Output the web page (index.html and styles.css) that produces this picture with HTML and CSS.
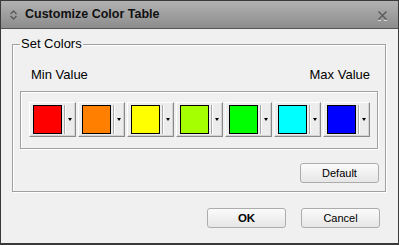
FILE: index.html
```html
<!DOCTYPE html>
<html lang="en">
<head>
  <meta charset="UTF-8" />
  <title>Customize Color Table</title>
  <link rel="stylesheet" href="styles.css">
</head>
<body>
  <div class="dialog">
    <div class="titlebar">
      <svg class="collapse" width="7" height="10" viewBox="0 0 7 10">
        <path d="M0.5 4 L3.5 1 L6.5 4" fill="none" stroke="#5a5a5a" stroke-width="1.4"/>
        <path d="M0.5 6 L3.5 9 L6.5 6" fill="none" stroke="#5a5a5a" stroke-width="1.4"/>
      </svg>
      <span class="title">Customize Color Table</span>
      <svg class="close" width="11" height="11" viewBox="0 0 11 11">
        <path d="M1.5 1.5 L9.5 9.5 M9.5 1.5 L1.5 9.5" stroke="#5e5e5e" stroke-width="1.6"/>
        <path d="M1 10.5 L4 10.5 M7 10.5 L10 10.5" stroke="#d8d8d8" stroke-width="1"/>
      </svg>
    </div>

    <div class="content">
      <fieldset class="group">
        <legend>Set Colors</legend>
        <div class="range-labels">
          <span>Min Value</span>
          <span>Max Value</span>
        </div>

        <!-- Palette : 7 boutons couleur avec flèche -->
        <div class="palette">
          <button class="color-btn"><span class="swatch red"></span><span class="drop"></span></button>
          <button class="color-btn"><span class="swatch orange"></span><span class="drop"></span></button>
          <button class="color-btn"><span class="swatch yellow"></span><span class="drop"></span></button>
          <button class="color-btn"><span class="swatch lime"></span><span class="drop"></span></button>
          <button class="color-btn"><span class="swatch green"></span><span class="drop"></span></button>
          <button class="color-btn"><span class="swatch cyan"></span><span class="drop"></span></button>
          <button class="color-btn"><span class="swatch blue"></span><span class="drop"></span></button>
        </div>

        <div class="group-actions">
          <button class="btn">Default</button>
        </div>
      </fieldset>

      <div class="actions">
        <button class="btn btn-ok">OK</button>
        <button class="btn">Cancel</button>
      </div>
    </div>
  </div>
</body>
</html>
```

FILE: styles.css
```css
/* --- Reset --- */
* {
  margin: 0;
  padding: 0;
  box-sizing: border-box;
}
html,
body {
  width: 399px;
  height: 245px;
  font-family: "Liberation Sans", Arial, sans-serif;
  background: #f0f0f0;
  color: #000;
  overflow: hidden;
}

/* --- Fenêtre --- */
.dialog {
  width: 399px;
  height: 245px;
  border: 1px solid #3a3a3a;
  border-bottom-width: 2px;
  background: #f0f0f0;
  display: flex;
  flex-direction: column;
}

/* --- Barre de titre --- */
.titlebar {
  height: 28px;
  flex: none;
  display: flex;
  align-items: center;
  padding: 0 10px 0 9px;
  background: linear-gradient(#b2b2b2, #8c8c8c);
  border-bottom: 1px solid #555;
}
.collapse {
  flex: none;
  margin-top: 1px;
}
.title {
  flex: 1;
  margin-left: 8px;
  font-size: 12.5px;
  line-height: 15px;
  font-weight: bold;
  color: #111;
}
.close {
  flex: none;
  margin-top: 2px;
}

/* --- Contenu --- */
.content {
  padding: 7px 18px 0 11px;
}

/* --- Cadre "Set Colors" --- */
.group {
  border: 1px solid #a0a0a0;
  box-shadow: 1px 1px 0 #fff, inset 1px 1px 0 #fff;
  padding: 15px 7px 8px 7px;
}
.group legend {
  padding: 0 1px;
  font-size: 13px;
  line-height: 16px;
}

.range-labels {
  display: flex;
  justify-content: space-between;
  padding: 0 8px 0 11px;
  font-size: 13px;
  line-height: 15px;
  margin-bottom: 9px;
}

/* --- Palette de couleurs --- */
.palette {
  display: flex;
  gap: 2px;
  border: 1px solid #a0a0a0;
  box-shadow: inset 1px 1px 0 #fff, 1px 1px 0 #fff;
  padding: 10px 7px 11px 8px;
}
.color-btn {
  width: 47px;
  height: 35px;
  display: flex;
  align-items: center;
  padding: 2px 0 2px 3px;
  background: #ececec;
  border: 1px solid;
  border-color: #fff #8a8a8a #8a8a8a #fff;
  box-shadow: inset -1px -1px 0 #d2d2d2;
}
.swatch {
  width: 29px;
  height: 29px;
  border: 1px solid #000;
  flex: none;
}
.swatch.red { background: #ff0000; }
.swatch.orange { background: #ff8000; }
.swatch.yellow { background: #ffff00; }
.swatch.lime { background: #a6ff00; }
.swatch.green { background: #00ff00; }
.swatch.cyan { background: #00ffff; }
.swatch.blue { background: #0000ff; }

.drop {
  align-self: stretch;
  flex: 1;
  margin: 0 1px 0 2px;
  border-left: 1px solid #a8a8a8;
  box-shadow: inset 1px 0 0 #fff;
  display: flex;
  align-items: center;
  justify-content: center;
}
.drop::after {
  content: "";
  border-left: 2.5px solid transparent;
  border-right: 2.5px solid transparent;
  border-top: 3px solid #000;
  margin-left: 1px;
}

/* --- Boutons texte --- */
.group-actions {
  display: flex;
  justify-content: flex-end;
  margin: 14px -1px 0 0;
}
.btn {
  width: 79px;
  height: 20px;
  font-family: "Liberation Sans", Arial, sans-serif;
  font-size: 11px;
  color: #000;
  background: linear-gradient(#fbfbfb, #e6e6e6);
  border: 1px solid #acacac;
  border-radius: 3px;
}
.btn-ok {
  font-weight: bold;
  font-size: 11.5px;
}

.actions {
  display: flex;
  justify-content: flex-end;
  gap: 15px;
  margin-top: 16px;
}
```
